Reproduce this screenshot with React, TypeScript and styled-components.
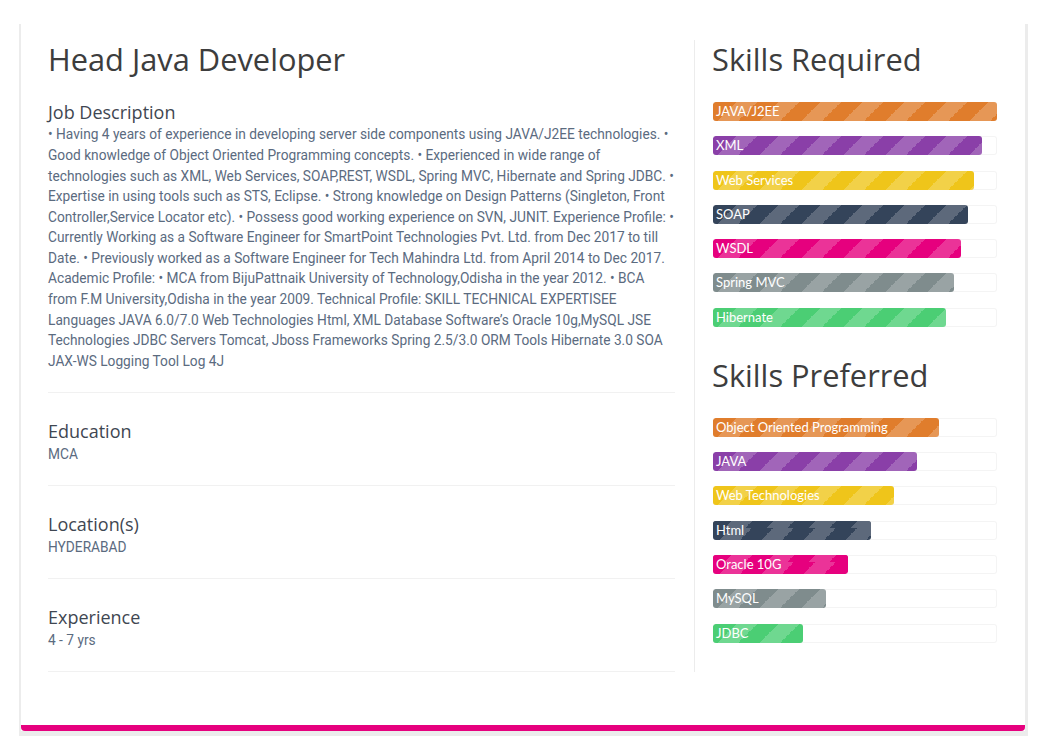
import React from "react";
import styled, { createGlobalStyle, css } from "styled-components";

const Global = createGlobalStyle`
  html, body { margin: 0; padding: 0; background: #fff; }
  body { width: 1050px; height: 742px; overflow: hidden; font-family: "Roboto", sans-serif; }
`;
const Page = styled.div`
  padding: 24px 22px 0 19px;
`;
const Card = styled.div`
  height: 712px;
  box-sizing: border-box;
  background: #fff;
  border: solid #ececec;
  border-width: 0 3px 5px 2px;
  display: flex;
  flex-direction: column;
`;
const Panel = styled.div`
  flex: 1;
  display: flex;
  padding: 16px 25px 0 27px;
  background: #fff;
  border-bottom: 6px solid #e6007e;
  border-radius: 0 0 4px 4px;
`;
const Left = styled.div`
  width: 647px;
  height: 632px;
  box-sizing: border-box;
  border-right: 1px solid #ececec;
  padding-right: 19px;
`;
const Right = styled.div`
  width: 285px;
  padding-left: 17px;
`;
const Title = styled.h1`
  margin: 0;
  font: 400 30.8px/38px "Open Sans", sans-serif;
  color: #3d3d3d;
`;
const Section = styled.section`
  padding-bottom: 21px;
  margin-bottom: 26px;
  border-bottom: 1px solid #f1f1f1;
`;
const FirstSection = styled(Section)`
  margin-top: 22px;
`;
const Heading = styled.h3`
  margin: 0;
  font: 400 18px/24.4px "Open Sans", sans-serif;
  color: #3f4752;
`;
const Text = styled.p`
  margin: 0;
  font: 400 13.72px/20.58px "Roboto", sans-serif;
  color: #5b6b7f;
`;
const SkillTitle = styled.h2`
  margin: 0 0 24px;
  font: 400 30.8px/38px "Open Sans", sans-serif;
  color: #3d3d3d;
`;
const SkillGroup = styled.div`
  margin-bottom: 29px;
`;
const Track = styled.div`
  height: 19px;
  width: 284px;
  margin-bottom: 15.3px;
  margin-left: 1px;
  border-radius: 3px;
  background: #fff;
  box-shadow: inset 0 0 0 1px #f4f4f4;
`;
const stripes = css`
  background-image: linear-gradient(
    -45deg,
    rgba(255, 255, 255, 0.2) 25%,
    transparent 25%,
    transparent 50%,
    rgba(255, 255, 255, 0.2) 50%,
    rgba(255, 255, 255, 0.2) 75%,
    transparent 75%,
    transparent
  );
  background-size: 42px 42px;
`;
const Bar = styled.div<{ $color: string; $seam?: boolean }>`
  position: relative;
  height: 19px;
  border-radius: 3px;
  padding-left: 3px;
  box-sizing: border-box;
  color: #fff;
  font: 400 13px/19px "Lato", sans-serif;
  white-space: nowrap;
  background-color: ${(p) => p.$color};
  ${stripes}
  background-position: ${(p) => (p.$seam ? "4px 0" : "2px 0")};
  ${(p) =>
    p.$seam &&
    css`
      &::before {
        content: "";
        position: absolute;
        left: 0;
        right: 0;
        top: 0;
        height: 7px;
        border-radius: 3px 3px 0 0;
        background-color: ${p.$color};
        ${stripes}
        background-position: -3px 0;
      }
    `}
`;
const BarLabel = styled.span`
  position: relative;
`;

const colors = ["#e07d2c", "#8a3fa8", "#efc51a", "#34445a", "#e6007e", "#7f8c8d", "#4bce74"];
type Skill = [string, number, boolean?];
const required: Skill[] = [
  ["JAVA/J2EE", 100], ["XML", 94.8], ["Web Services", 92], ["SOAP", 89.7], ["WSDL", 87.2], ["Spring MVC", 85], ["Hibernate", 82],
];
const preferred: Skill[] = [
  ["Object Oriented Programming", 79.7], ["JAVA", 71.8], ["Web Technologies", 63.6], ["Html", 55.7, true], ["Oracle 10G", 47.6, true], ["MySQL", 39.8], ["JDBC", 31.6],
];

const description =
  "• Having 4 years of experience in developing server side components using JAVA/J2EE technologies. • Good knowledge of Object Oriented Programming concepts. • Experienced in wide range of technologies such as XML, Web Services, SOAP,REST, WSDL, Spring MVC, Hibernate and Spring JDBC. • Expertise in using tools such as STS, Eclipse. • Strong knowledge on Design Patterns (Singleton, Front Controller,Service Locator etc). • Possess good working experience on SVN, JUNIT. Experience Profile: • Currently Working as a Software Engineer for SmartPoint Technologies Pvt. Ltd. from Dec 2017 to till Date. • Previously worked as a Software Engineer for Tech Mahindra Ltd. from April 2014 to Dec 2017. Academic Profile: • MCA from BijuPattnaik University of Technology,Odisha in the year 2012. • BCA from F.M University,Odisha in the year 2009. Technical Profile: SKILL TECHNICAL EXPERTISEE Languages JAVA 6.0/7.0 Web Technologies Html, XML Database Software’s Oracle 10g,MySQL JSE Technologies JDBC Servers Tomcat, Jboss Frameworks Spring 2.5/3.0 ORM Tools Hibernate 3.0 SOA JAX-WS Logging Tool Log 4J";

const Skills = ({ items }: { items: Skill[] }) => (
  <SkillGroup>
    {items.map(([name, pct, seam], i) => (
      <Track key={name}>
        <Bar $color={colors[i]} $seam={seam} style={{ width: `${pct}%` }}>
          <BarLabel>{name}</BarLabel>
        </Bar>
      </Track>
    ))}
  </SkillGroup>
);

export default function App() {
  return (
    <Page>
      <Global />
      <Card>
        <Panel>
          <Left>
            <Title>Head Java Developer</Title>
            <FirstSection>
              <Heading>Job Description</Heading>
              <Text>{description}</Text>
            </FirstSection>
            <Section>
              <Heading>Education</Heading>
              <Text>MCA</Text>
            </Section>
            <Section>
              <Heading>Location(s)</Heading>
              <Text>HYDERABAD</Text>
            </Section>
            <Section>
              <Heading>Experience</Heading>
              <Text>4 - 7 yrs</Text>
            </Section>
          </Left>
          <Right>
            <SkillTitle>Skills Required</SkillTitle>
            <Skills items={required} />
            <SkillTitle>Skills Preferred</SkillTitle>
            <Skills items={preferred} />
          </Right>
        </Panel>
      </Card>
    </Page>
  );
}
